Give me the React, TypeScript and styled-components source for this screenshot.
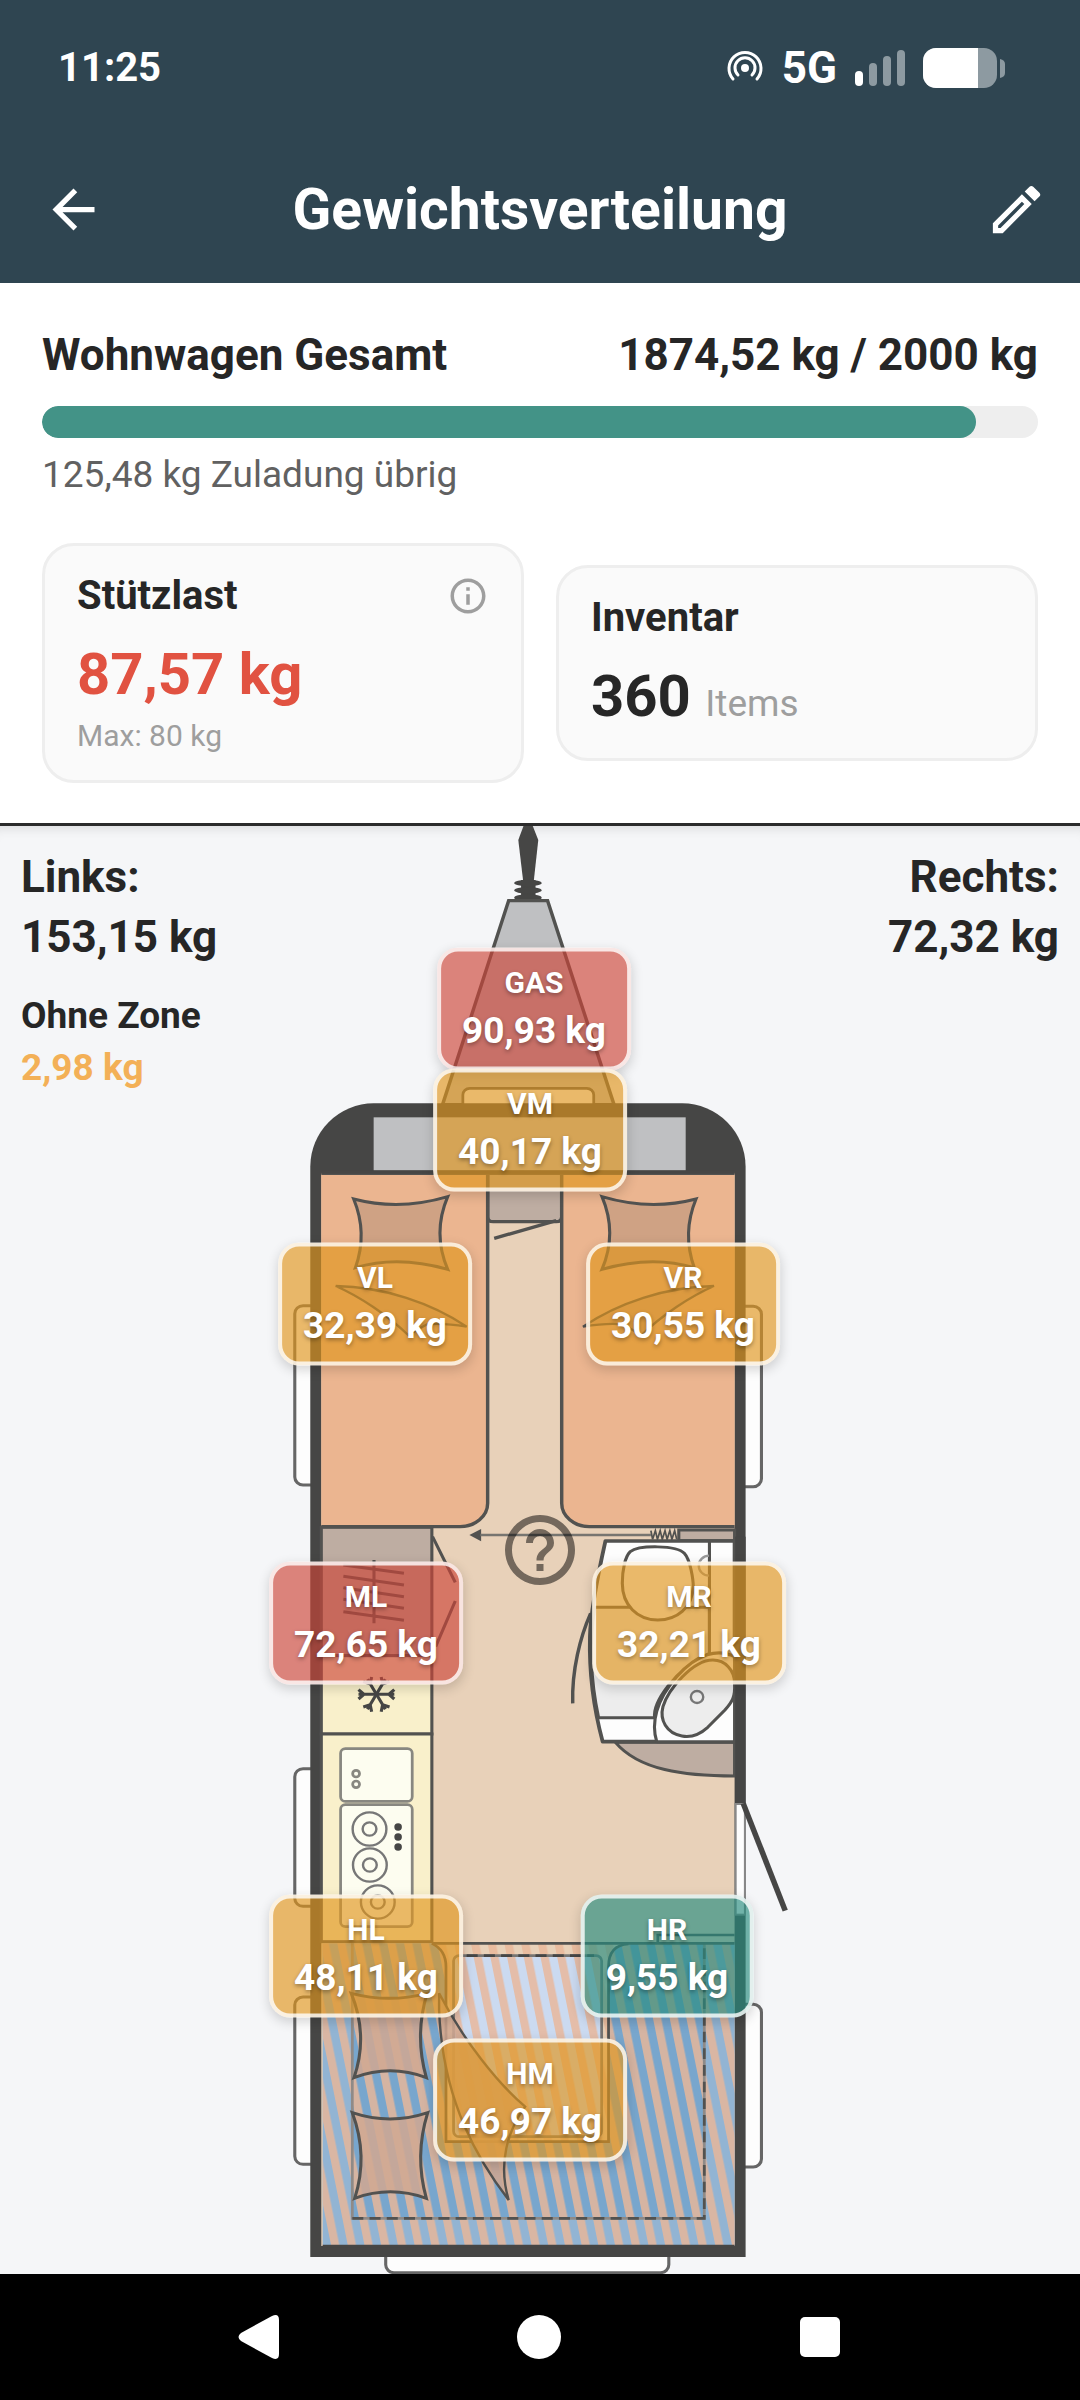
import React from "react";
import styled, { createGlobalStyle } from "styled-components";
import { MdArrowBack, MdOutlineEdit, MdHelpOutline, MdInfoOutline } from "react-icons/md";

const GlobalStyle = createGlobalStyle`
  * { box-sizing: border-box; }
  body {
    margin: 0;
    background: #000;
    font-family: Roboto, "Noto Sans", sans-serif;
    color: #262626;
  }
  button {
    margin: 0;
    padding: 0;
    border: 0;
    background: none;
    color: inherit;
    font: inherit;
    cursor: pointer;
  }
  svg { display: block; }
`;

const Screen = styled.div`
  display: flex;
  flex-direction: column;
  min-height: 100vh;
`;

const TopArea = styled.header`
  background: #2f4551;
  color: #fff;
`;

const StatusBar = styled.div`
  display: flex;
  align-items: center;
  justify-content: space-between;
  height: 136px;
  padding: 0 74px 0 58px;
`;

const Clock = styled.time`
  font-size: 40px;
  font-weight: 700;
  line-height: 48px;
`;

const StatusIcons = styled.div`
  display: flex;
  align-items: center;
  gap: 18px;
`;

const Network = styled.span`
  font-size: 44px;
  font-weight: 700;
  line-height: 48px;
`;

const AppBar = styled.div`
  display: grid;
  grid-template-columns: 64px 1fr 74px;
  align-items: center;
  height: 147px;
  padding: 0 32px 0 42px;
`;

const IconButton = styled.button`
  display: grid;
  font-size: 63px;

  &:last-child {
    justify-self: end;
  }
`;

const Title = styled.h1`
  margin: 0;
  font-size: 57px;
  font-weight: 700;
  line-height: 76px;
  text-align: center;
`;

const Summary = styled.section`
  padding: 42px 42px 40px;
  background: #fff;
  border-bottom: 3px solid #2b2b2b;
`;

const TotalRow = styled.div`
  display: flex;
  justify-content: space-between;
  font-size: 44px;
  font-weight: 700;
  line-height: 60px;
`;

const Heading = styled.h2`
  margin: 0;
  font: inherit;
`;

const Track = styled.div`
  height: 32px;
  margin-top: 21px;
  border-radius: 16px;
  background: #eee;
  overflow: hidden;
`;

const Fill = styled.div`
  height: 100%;
  border-radius: 16px;
  background: #439387;
`;

const Remaining = styled.p`
  margin: 11px 0 42px;
  font-size: 37px;
  line-height: 52px;
  color: #616161;
`;

const Cards = styled.div`
  display: flex;
  align-items: center;
  gap: 32px;
`;

const Card = styled.article`
  flex: 1;
  padding: 24px 32px;
  border: 3px solid #eee;
  border-radius: 32px;
  background: #fafafa;
`;

const CardHead = styled.div`
  display: flex;
  align-items: center;
  justify-content: space-between;
  height: 52px;
  margin-bottom: 14px;
`;

const CardTitle = styled.h3`
  margin: 0;
  font-size: 40px;
  font-weight: 700;
  line-height: 52px;
`;

const InfoButton = styled.button`
  font-size: 42px;
  color: #9e9e9e;
`;

const Figure = styled.p<{ $alert?: boolean }>`
  margin: 0;
  font-size: 58px;
  font-weight: 700;
  line-height: 76px;
  color: ${(p) => (p.$alert ? "#e15241" : "inherit")};
`;

const Unit = styled.span`
  font-size: 37px;
  font-weight: 400;
  line-height: 52px;
  color: #9e9e9e;
`;

const Limit = styled.p`
  margin: 4px 0 0;
  font-size: 30px;
  line-height: 40px;
  color: #9e9e9e;
`;

const Stage = styled.main`
  display: grid;
  grid-template-columns: 1fr 560px 1fr;
  background: #f5f6f8;
  box-shadow: inset 0 12px 12px -10px rgba(0, 0, 0, 0.12);
`;

const Side = styled.div<{ $end?: boolean }>`
  padding: 21px;
  text-align: ${(p) => (p.$end ? "right" : "left")};
  white-space: nowrap;
`;

const SideWeight = styled.p`
  margin: 0;
  font-size: 44px;
  font-weight: 700;
  line-height: 60px;
`;

const Unassigned = styled.p`
  margin: 23px 0 0;
  font-size: 37px;
  font-weight: 700;
  line-height: 52px;
`;

const UnassignedWeight = styled.span`
  display: block;
  color: #f3b057;
`;

const Plan = styled.div`
  position: relative;
  height: 1448px;
`;

const Drawing = styled.svg`
  width: 100%;
  height: 100%;
`;

const tones = {
  red: "rgba(205, 69, 56, 0.65)",
  orange: "rgba(224, 149, 28, 0.65)",
  green: "rgba(38, 140, 126, 0.65)",
};

const Zone = styled.button<{ $x: number; $y: number; $tone: keyof typeof tones }>`
  position: absolute;
  left: ${(p) => p.$x}px;
  top: ${(p) => p.$y}px;
  transform: translate(-50%, -50%);
  padding: 10px 21px;
  border: 4px solid rgba(255, 255, 255, 0.8);
  border-radius: 21px;
  background: ${(p) => tones[p.$tone]};
  box-shadow: 0 4px 12px rgba(0, 0, 0, 0.16);
  color: #fff;
  font-weight: 700;
  text-align: center;
  text-shadow: 0 2px 4px rgba(0, 0, 0, 0.35);
  white-space: nowrap;
`;

const ZoneName = styled.span`
  display: block;
  font-size: 30px;
  line-height: 42px;
`;

const ZoneWeight = styled.span`
  display: block;
  font-size: 37px;
  line-height: 53px;
`;

const HelpButton = styled.button`
  position: absolute;
  left: 280px;
  top: 724px;
  transform: translate(-50%, -50%);
  font-size: 84px;
  color: rgba(0, 0, 0, 0.5);
`;

const NavBar = styled.nav`
  display: grid;
  grid-template-columns: repeat(3, 281px);
  justify-content: center;
  align-items: center;
  height: 126px;
  background: #000;
`;

const NavButton = styled.button`
  display: grid;
  place-items: center;
`;

const zones: { name: string; kg: string; x: number; y: number; tone: keyof typeof tones }[] = [
  { name: "GAS", kg: "90,93 kg", x: 274, y: 183, tone: "red" },
  { name: "VM", kg: "40,17 kg", x: 270, y: 304, tone: "orange" },
  { name: "VL", kg: "32,39 kg", x: 115, y: 478, tone: "orange" },
  { name: "VR", kg: "30,55 kg", x: 423, y: 478, tone: "orange" },
  { name: "ML", kg: "72,65 kg", x: 106, y: 797, tone: "red" },
  { name: "MR", kg: "32,21 kg", x: 429, y: 797, tone: "orange" },
  { name: "HL", kg: "48,11 kg", x: 106, y: 1130, tone: "orange" },
  { name: "HR", kg: "9,55 kg", x: 407, y: 1130, tone: "green" },
  { name: "HM", kg: "46,97 kg", x: 270, y: 1274, tone: "orange" },
];

const WALL = "#464645";
const LINE = "#525250";
const TAUPE = "#beada2";

const FrontPillow = () => (
  <>
    <path d="M272 1167Q405 1203 545 1160Q500 1270 545 1378Q400 1335 277 1373Q313 1270 272 1167Z" fill="#cfa284" />
    <path d="M220 1428C360 1430 500 1480 600 1550Q530 1538 485 1543L430 1575C370 1515 290 1460 220 1428Z" fill="#d3a384" strokeWidth="7" />
  </>
);

const Burner = ({ x, y }: { x: number; y: number }) => (
  <g fill="none" stroke="#777" strokeWidth="7">
    <ellipse cx={x} cy={y} rx="49" ry="50" />
    <ellipse cx={x} cy={y} rx="20" ry="20" />
  </g>
);

const Snowflake = () => (
  <g transform="translate(338 2653)" fill="none" stroke={WALL} strokeWidth="9">
    {[0, 60, 120, 180, 240, 300].map((angle) => (
      <path key={angle} d="M0 0H52M52 -14L36 0L52 14" transform={`rotate(${angle})`} />
    ))}
  </g>
);

const CaravanPlan = () => (
  <Drawing viewBox="0 48 1626 4344" preserveAspectRatio="none" aria-hidden="true">
    <defs>
      <pattern id="stripes" width="48.5" height="60" patternUnits="userSpaceOnUse" patternTransform="skewX(11)">
        <rect width="24" height="60" fill="#e9b799" />
      </pattern>
    </defs>

    {/* windows */}
    <g fill="#fdfdfd" stroke="#666" strokeWidth="9">
      <rect x="101" y="1487" width="90" height="538" rx="24" />
      <rect x="1366" y="1489" width="90" height="541" rx="24" />
      <rect x="101" y="2876" width="90" height="413" rx="24" />
      <rect x="101" y="3561" width="90" height="502" rx="24" />
      <rect x="1366" y="3583" width="90" height="488" rx="24" />
      <rect x="365" y="4290" width="822" height="98" rx="24" />
    </g>

    {/* hitch and drawbar */}
    <path d="M765 48L750 90L764 212H795L808 90L792 48Z" fill={WALL} />
    <g fill={WALL}>
      <rect x="758" y="210" width="42" height="60" />
      <ellipse cx="778" cy="219" rx="40" ry="10" />
      <ellipse cx="778" cy="241" rx="40" ry="10" />
      <ellipse cx="778" cy="263" rx="40" ry="10" />
    </g>
    <path d="M722 272H835L1028 884H530Z" fill="#bfc0c2" stroke={LINE} strokeWidth="10" />
    <rect x="589" y="835" width="380" height="80" rx="20" fill="#fdfdfd" stroke={LINE} strokeWidth="8" />

    {/* shell */}
    <path d="M146 1070A184 190 0 0 1 330 880H1226A184 190 0 0 1 1410 1070V4341H146Z" fill={WALL} />
    <rect x="330" y="922" width="906" height="160" fill="#bfc0c2" />
    <rect x="178" y="1090" width="1200" height="3218" fill="#e8d1b9" />

    {/* front beds */}
    <g stroke={LINE} strokeWidth="10" strokeLinejoin="round">
      <path d="M661 1090H876V1220Q876 1235 860 1235H677Q661 1235 661 1220Z" fill={TAUPE} />
      <path d="M680 1285L860 1232" />
      <path d="M178 1090H661V2080A80 70 0 0 1 581 2150H178" fill="#ebb590" />
      <path d="M1378 1090H876V2080A80 70 0 0 0 956 2150H1378" fill="#ebb590" />
      <path d="M178 1086H1378" stroke={WALL} />
    </g>
    <g stroke={LINE} strokeWidth="9">
      <FrontPillow />
      <g transform="translate(1538 0) scale(-1 1)">
        <FrontPillow />
      </g>
    </g>

    {/* sliding divider */}
    <path d="M608 2175L642 2157V2194Z" fill={LINE} />
    <path d="M640 2175H1135" stroke="#777570" strokeWidth="7" />
    <path d="M1135 2162L1140 2188L1148 2162L1154 2188L1162 2162L1168 2188L1176 2162L1182 2188L1190 2162L1196 2188L1204 2162L1210 2188" fill="none" stroke={LINE} strokeWidth="5" />
    <rect x="1216" y="2160" width="162" height="32" fill={TAUPE} stroke={LINE} strokeWidth="9" />

    {/* wardrobe, fridge, kitchen */}
    <g stroke={LINE} strokeWidth="9">
      <rect x="178" y="2152" width="321" height="385" fill={TAUPE} />
      <rect x="178" y="2537" width="321" height="235" fill="#f9f0cb" />
      <rect x="178" y="2772" width="321" height="623" fill="#f9f0cb" />
      <path d="M331 2250V2440M242 2265L418 2290M242 2299L418 2325M242 2333L418 2360M242 2368L418 2395M242 2405L418 2431" fill="none" />
      <path d="M501 2180L567 2317M567 2373L510 2510" fill="none" />
    </g>
    <Snowflake />
    <g fill="#fdfdf0" stroke="#888780" strokeWidth="8">
      <rect x="234" y="2816" width="208" height="158" rx="14" />
      <circle cx="279" cy="2891" r="10" />
      <circle cx="279" cy="2923" r="10" />
      <rect x="234" y="2984" width="208" height="366" rx="14" />
    </g>
    <Burner x={318} y={3057} />
    <Burner x={319} y={3165} />
    <Burner x={342} y={3276} />
    <g fill={WALL}>
      <circle cx="401" cy="3051" r="11" />
      <circle cx="401" cy="3081" r="11" />
      <circle cx="401" cy="3111" r="11" />
    </g>

    {/* bathroom */}
    <g stroke={LINE} strokeWidth="9" strokeLinejoin="round">
      <path d="M1032 2797C1100 2880 1230 2898 1378 2898V2797Z" fill={TAUPE} />
      <path d="M1003 2193H1378V2795H995C970 2700 955 2600 958 2480C960 2400 980 2300 1003 2193Z" fill="#fdfdfd" strokeWidth="11" />
      <path d="M972 2392H1305V2530C1200 2580 1140 2680 1146 2723H983C962 2620 955 2500 972 2392Z" fill="#ededed" />
      <path d="M1305 2193V2540" />
      <path d="M1075 2225C1100 2205 1210 2205 1232 2230C1250 2250 1258 2310 1258 2330C1255 2395 1210 2430 1155 2430C1095 2430 1052 2385 1052 2320C1052 2280 1060 2240 1075 2225Z" fill="#fdfdfd" />
      <path d="M1304 2237A30 30 0 0 0 1304 2297" fill="none" stroke="#999" strokeWidth="7" />
      <path d="M1378 2540C1330 2515 1270 2530 1210 2600C1150 2670 1135 2740 1152 2795H1378Z" fill="#fdfdfd" />
      <path d="M1315 2550C1350 2550 1378 2580 1378 2620C1380 2660 1372 2675 1350 2700L1300 2752C1270 2780 1245 2782 1225 2778C1180 2770 1160 2730 1170 2690C1185 2640 1255 2550 1315 2550Z" fill="#ededed" />
      <circle cx="1269" cy="2661" r="18" fill="none" stroke="#777" strokeWidth="7" />
      <path d="M960 2410C930 2480 905 2580 908 2680" fill="none" strokeWidth="10" />
    </g>
    <rect x="1380" y="2180" width="30" height="800" fill={WALL} />

    {/* entrance door */}
    <rect x="1381" y="2982" width="27" height="332" fill="#fdfdfd" stroke="#888" strokeWidth="6" />
    <path d="M1403 2980L1525 3302" stroke={WALL} strokeWidth="16" />

    {/* rear lounge */}
    <rect x="182" y="3400" width="1196" height="908" fill="#92b4d3" />
    <rect x="270" y="3400" width="1020" height="825" fill="#78a6cd" />
    <path d="M499 3400H1070Q1012 3405 1012 3470V3995H540V3470Q540 3420 499 3400Z" fill="#e8d1b9" />
    <rect x="562" y="3437" width="430" height="543" rx="16" fill="#cbdaf0" />
    <rect x="182" y="3400" width="1196" height="908" fill="url(#stripes)" opacity="0.82" />
    <g fill="none" stroke={LINE} strokeWidth="8">
      <path d="M499 3400Q540 3420 540 3470V3995H1012V3470Q1012 3405 1070 3402" />
      <path d="M268 3400V4225H1290V3400" stroke="#8f8a87" />
      <path d="M268 4225H1290V3400" stroke={LINE} strokeDasharray="32 18" />
      <rect x="562" y="3437" width="430" height="543" rx="16" stroke="#777573" />
      <path d="M600 3437H970" stroke={WALL} strokeDasharray="32 18" />
      <path d="M499 3400H1378M1155 3400V3375H1378" />
      <path d="M182 4308H1378" stroke={WALL} />
    </g>
    <g fill="rgba(208, 168, 146, 0.86)" stroke={LINE} strokeWidth="9">
      <path d="M265 3550Q375 3580 485 3550Q448 3677 483 3803Q378 3762 273 3803Q315 3677 265 3550Z" />
      <path d="M268 3908Q378 3946 487 3908Q448 4037 483 4165Q378 4126 275 4165Q315 4037 268 3908Z" />
      <path d="M520 3550C590 3690 690 3820 770 3890C720 3960 690 4060 722 4170C640 4060 530 3880 520 3600Z" strokeWidth="7" />
    </g>
  </Drawing>
);

const HotspotIcon = () => (
  <svg width="38" height="38" viewBox="0 0 38 38" aria-hidden="true">
    <g fill="none" stroke="#fff" strokeWidth="3" strokeLinecap="round">
      <path d="M7 30A16 16 0 1 1 31 30" />
      <path d="M12 26A10 10 0 1 1 26 26" />
    </g>
    <circle cx="19" cy="19" r="4" fill="#fff" />
  </svg>
);

const SignalIcon = () => (
  <svg width="50" height="36" viewBox="0 0 50 36" aria-hidden="true">
    <rect y="21" width="8" height="15" rx="4" fill="#fff" />
    <g fill="#8d9aa1">
      <rect x="14" y="13" width="8" height="23" rx="4" />
      <rect x="28" y="6" width="8" height="30" rx="4" />
      <rect x="42" width="8" height="36" rx="4" />
    </g>
  </svg>
);

const BatteryIcon = () => (
  <svg width="83" height="40" viewBox="0 0 83 40" aria-hidden="true">
    <rect width="74" height="40" rx="13" fill="#8d9aa1" />
    <path d="M13 0H55V40H13A13 13 0 0 1 0 27V13A13 13 0 0 1 13 0Z" fill="#fff" />
    <path d="M77 11Q82 12 82 16V25Q82 29 77 30Z" fill="#8d9aa1" />
  </svg>
);

const total = 1874.52;
const allowed = 2000;

export default function App() {
  return (
    <Screen>
      <GlobalStyle />
      <TopArea>
        <StatusBar>
          <Clock>11:25</Clock>
          <StatusIcons>
            <HotspotIcon />
            <Network>5G</Network>
            <SignalIcon />
            <BatteryIcon />
          </StatusIcons>
        </StatusBar>
        <AppBar>
          <IconButton aria-label="Zurück">
            <MdArrowBack />
          </IconButton>
          <Title>Gewichtsverteilung</Title>
          <IconButton aria-label="Bearbeiten">
            <MdOutlineEdit />
          </IconButton>
        </AppBar>
      </TopArea>

      <Summary>
        <TotalRow>
          <Heading>Wohnwagen Gesamt</Heading>
          <span>1874,52 kg / 2000 kg</span>
        </TotalRow>
        <Track role="progressbar" aria-label="Wohnwagen Gesamt" aria-valuenow={total} aria-valuemin={0} aria-valuemax={allowed}>
          <Fill style={{ width: `${(total / allowed) * 100}%` }} />
        </Track>
        <Remaining>125,48 kg Zuladung übrig</Remaining>
        <Cards>
          <Card>
            <CardHead>
              <CardTitle>Stützlast</CardTitle>
              <InfoButton aria-label="Info zur Stützlast">
                <MdInfoOutline />
              </InfoButton>
            </CardHead>
            <Figure $alert>87,57 kg</Figure>
            <Limit>Max: 80 kg</Limit>
          </Card>
          <Card>
            <CardHead>
              <CardTitle>Inventar</CardTitle>
            </CardHead>
            <Figure>
              360 <Unit>Items</Unit>
            </Figure>
          </Card>
        </Cards>
      </Summary>

      <Stage>
        <Side>
          <SideWeight>
            Links:
            <br />
            153,15 kg
          </SideWeight>
          <Unassigned>
            Ohne Zone
            <UnassignedWeight>2,98 kg</UnassignedWeight>
          </Unassigned>
        </Side>
        <Plan>
          <CaravanPlan />
          <HelpButton aria-label="Hilfe">
            <MdHelpOutline />
          </HelpButton>
          {zones.map((z) => (
            <Zone key={z.name} $x={z.x} $y={z.y} $tone={z.tone}>
              <ZoneName>{z.name}</ZoneName>
              <ZoneWeight>{z.kg}</ZoneWeight>
            </Zone>
          ))}
        </Plan>
        <Side $end>
          <SideWeight>
            Rechts:
            <br />
            72,32 kg
          </SideWeight>
        </Side>
      </Stage>

      <NavBar>
        <NavButton aria-label="Zurück">
          <svg width="46" height="46" viewBox="0 0 46 46" fill="#fff" aria-hidden="true">
            <path d="M5 19L36 2Q43 -1 43 6V40Q43 47 36 44L5 27Q0 23 5 19Z" />
          </svg>
        </NavButton>
        <NavButton aria-label="Startseite">
          <svg width="46" height="46" viewBox="0 0 46 46" fill="#fff" aria-hidden="true">
            <circle cx="22" cy="23" r="22" />
          </svg>
        </NavButton>
        <NavButton aria-label="Übersicht">
          <svg width="46" height="46" viewBox="0 0 46 46" fill="#fff" aria-hidden="true">
            <rect x="2" y="3" width="40" height="40" rx="5" />
          </svg>
        </NavButton>
      </NavBar>
    </Screen>
  );
}
